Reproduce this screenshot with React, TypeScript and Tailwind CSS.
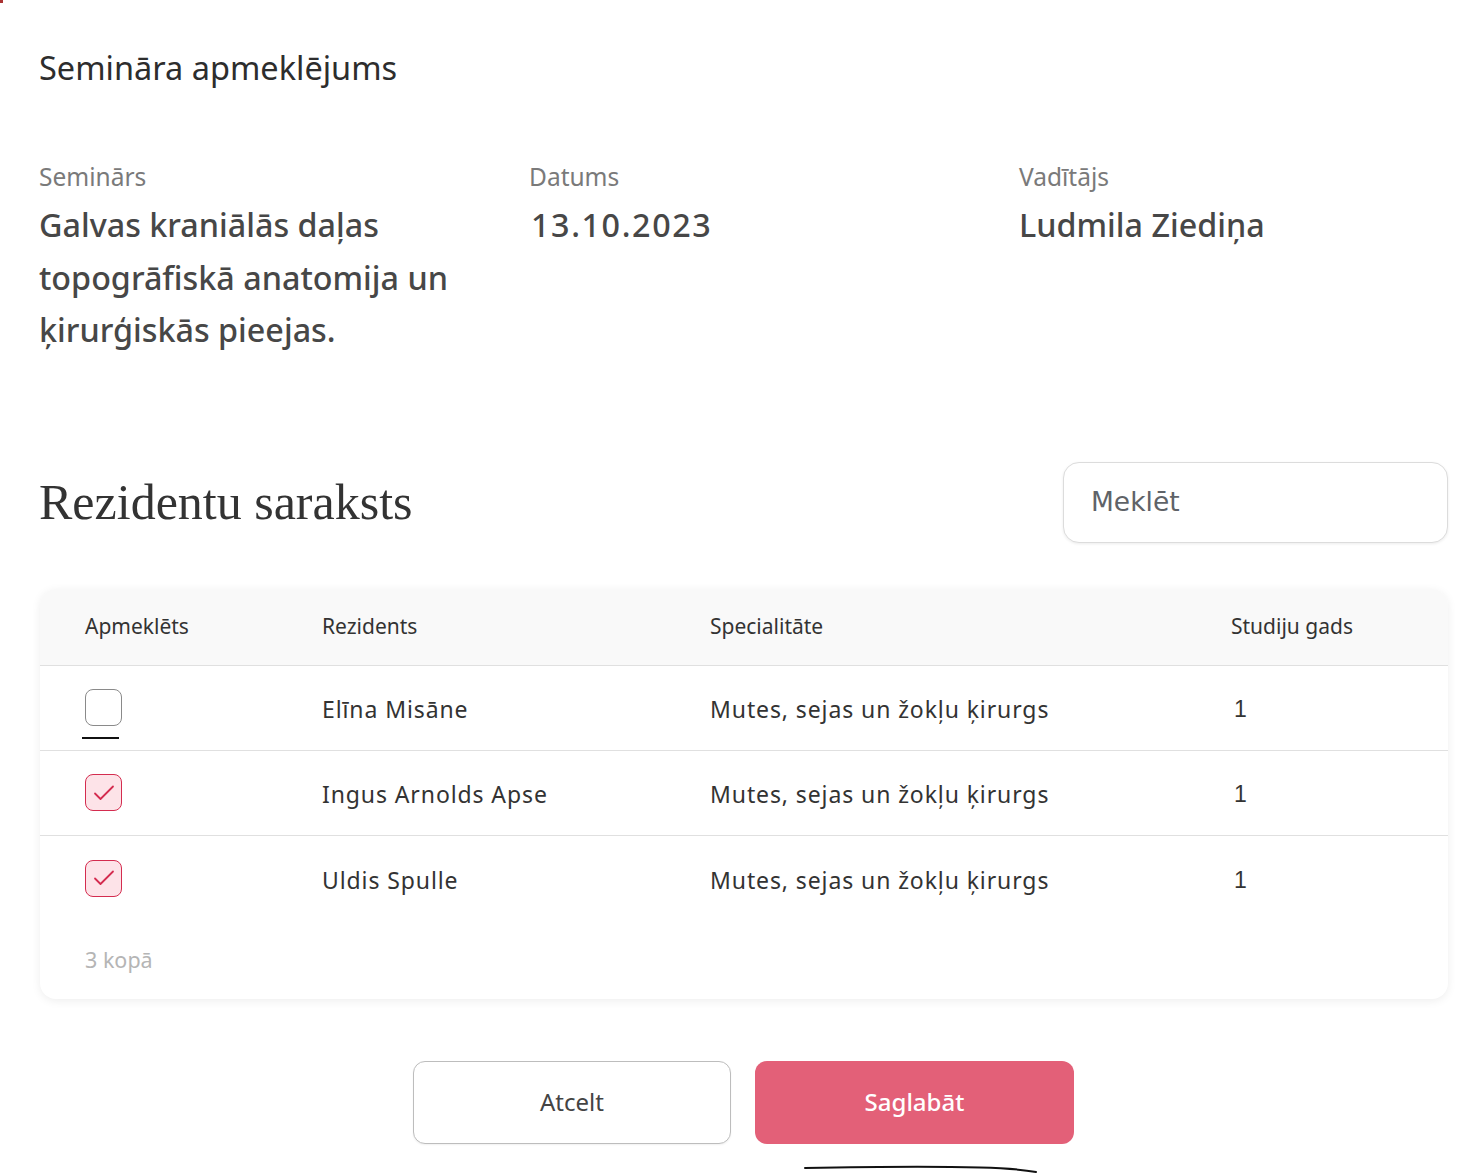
const rows = [
  { name: "Elīna Misāne", spec: "Mutes, sejas un žokļu ķirurgs", year: 1, checked: false },
  { name: "Ingus Arnolds Apse", spec: "Mutes, sejas un žokļu ķirurgs", year: 1, checked: true },
  { name: "Uldis Spulle", spec: "Mutes, sejas un žokļu ķirurgs", year: 1, checked: true },
]

function Checkbox({ checked }: { checked: boolean }) {
  if (!checked) {
    return (
      <div className="relative w-[37px] h-[37px]">
        <div className="w-[37px] h-[37px] rounded-[8px] border border-[#8a8a8a] bg-white" />
        {/* focus underline */}
        <div className="absolute left-[-3px] top-[48px] w-[37px] h-[2px] bg-[#111]" />
      </div>
    )
  }
  return (
    <div className="w-[37px] h-[37px] rounded-[8px] border border-[#d42c4f] bg-[#fde3e8] flex items-center justify-center">
      <svg width="24" height="24" viewBox="0 0 24 24" fill="none">
        <path d="M3 12.5l5.5 5.5L21 5.5" stroke="#d42c4f" strokeWidth="1.8" strokeLinecap="round" strokeLinejoin="round" />
      </svg>
    </div>
  )
}

export default function App() {
  return (
    <div className="relative min-h-[1175px] bg-white pl-[39px] pr-[20px] pt-[48px] font-['Noto_Sans',sans-serif] text-[#333]">
      <div className="absolute left-0 top-0 w-[3px] h-[3px] bg-[#a33]" />

      <h1 className="text-[32.5px] leading-[40px] text-[#2d2d2d]">Semināra apmeklējums</h1>

      {/* Seminar info */}
      <div className="grid grid-cols-[490px_490px_1fr] mt-[73px]">
        <div>
          <div className="text-[24.5px] leading-[32px] text-[#7a7a7a]">Seminārs</div>
          <div className="mt-[5px] text-[32.3px] leading-[52.5px] font-medium text-[#474747] w-[430px]">
            Galvas kraniālās daļas topogrāfiskā anatomija un ķirurģiskās pieejas.
          </div>
        </div>
        <div>
          <div className="text-[24.5px] leading-[32px] text-[#7a7a7a]">Datums</div>
          <div className="mt-[5px] text-[32.3px] leading-[52.5px] font-medium tracking-[1.6px] text-[#474747] pl-[2px]">13.10.2023</div>
        </div>
        <div>
          <div className="text-[24.5px] leading-[32px] text-[#7a7a7a]">Vadītājs</div>
          <div className="mt-[5px] text-[32.3px] leading-[52.5px] font-medium text-[#474747]">Ludmila Ziediņa</div>
        </div>
      </div>

      {/* List heading + search */}
      <div className="flex items-center justify-between mt-[106px]">
        <h2 className="font-['Liberation_Serif',serif] text-[50px] leading-[56px] text-[#333]">Rezidentu saraksts</h2>
        <div className="w-[385px] h-[81px] rounded-[16px] border border-[#dcdcdc] bg-white shadow-[0_1px_3px_rgba(0,0,0,0.08)] flex items-center px-[27px]">
          <input
            placeholder="Meklēt"
            className="w-full outline-none bg-transparent font-['DejaVu_Sans',sans-serif] text-[26.5px] text-[#555] placeholder:text-[#5f6368]"
          />
        </div>
      </div>

      {/* Table */}
      <div className="mt-[46px] ml-px rounded-[16px] bg-white shadow-[0_2px_10px_rgba(0,0,0,0.07)] overflow-hidden">
        <div className="grid grid-cols-[237px_388px_521px_1fr] pl-[45px] h-[77px] items-center bg-[#f9f9f9] border-b border-[#e0e0e0] text-[21px] text-[#333]">
          <div>Apmeklēts</div>
          <div>Rezidents</div>
          <div>Specialitāte</div>
          <div>Studiju gads</div>
        </div>
        {rows.map((r, i) => (
          <div
            key={i}
            className={`grid grid-cols-[237px_388px_521px_1fr] pl-[45px] h-[85px] items-center text-[23px] tracking-[0.9px] text-[#333] ${
              i < rows.length - 1 ? "border-b border-[#e0e0e0]" : ""
            }`}
          >
            <div><Checkbox checked={r.checked} /></div>
            <div className="pt-[4px]">{r.name}</div>
            <div className="pt-[4px]">{r.spec}</div>
            <div className="pt-[4px] pl-[3px] font-['Liberation_Sans',sans-serif]">{r.year}</div>
          </div>
        ))}
        <div className="pl-[45px] pt-[24px] pb-[24px] text-[21.5px] leading-[30px] text-[#b5b5b5]">3 kopā</div>
      </div>

      {/* Actions */}
      <div className="flex justify-center gap-[24px] mt-[62px]">
        <button className="w-[318px] h-[83px] rounded-[12px] border border-[#bdbdbd] bg-white text-[24px] text-[#444] shadow-[0_1px_2px_rgba(0,0,0,0.06)]">
          Atcelt
        </button>
        <button className="w-[319px] h-[83px] rounded-[12px] bg-[#e36078] text-[24px] text-white font-medium">
          Saglabāt
        </button>
      </div>

      {/* pen stroke */}
      <svg className="absolute left-[800px] top-[1160px]" width="240" height="15" viewBox="0 0 240 15" fill="none">
        <path d="M5 8 C60 7 120 6 180 7.5 C200 8 220 9 236 12" stroke="#111" strokeWidth="2" strokeLinecap="round" />
      </svg>
    </div>
  )
}
